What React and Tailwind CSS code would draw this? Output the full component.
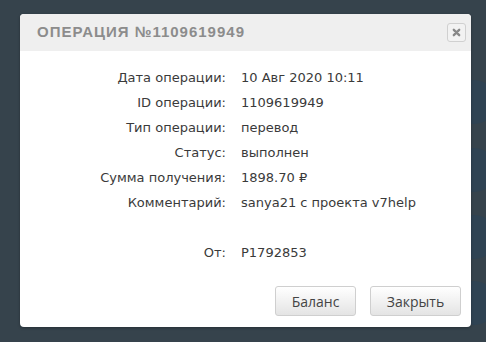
import React from 'react';

const rows = [
  ['Дата операции:', '10 Авг 2020 10:11'],
  ['ID операции:', '1109619949'],
  ['Тип операции:', 'перевод'],
  ['Статус:', 'выполнен'],
  ['Сумма получения:', '1898.70 ₽'],
  ['Комментарий:', 'sanya21 с проекта v7help'],
  ['', ''],
  ['От:', 'P1792853'],
];

function App() {
  return (
    <div className="relative w-full h-[342px] overflow-hidden bg-[#36434c] pt-[14px] pl-[20px]">
      {/* background blobs behind the dialog */}
      <div className="absolute left-[452px] top-[80px] w-[44px] h-[44px] rounded-full bg-[#2f4353]" />
      <div className="absolute left-[452px] top-[148px] w-[44px] h-[44px] rounded-full bg-[#2f4353]" />
      <div className="absolute left-[452px] top-[215px] w-[44px] h-[44px] rounded-full bg-[#2f4353]" />
      <div className="absolute left-[452px] top-[281px] w-[44px] h-[44px] rounded-full bg-[#2f4353]" />

      <div className="relative w-[451px] h-[313px] rounded-[4px] bg-white overflow-hidden shadow-[0_1px_3px_rgba(0,0,0,0.3)] flex flex-col">
        <div className="h-[37px] shrink-0 bg-[#efefef] flex items-center justify-between pl-[17px] pr-[5px]">
          <div className="text-[15px] font-bold tracking-[1px] text-[#8c8c8c] font-['Liberation_Sans',sans-serif]">
            ОПЕРАЦИЯ №1109619949
          </div>
          <button className="w-[19px] h-[19px] rounded-[3px] border border-[#d0d0d0] bg-[#f2f2f2] flex items-center justify-center">
            <svg width="9" height="9" viewBox="0 0 10 10">
              <path d="M2 2 L8 8 M8 2 L2 8" stroke="#888" strokeWidth="2.6" strokeLinecap="round" />
            </svg>
          </button>
        </div>

        <div className="pt-[14px] font-['DejaVu_Sans',sans-serif] text-[13px] text-[#3a3a3a]">
          {rows.map(([label, value], i) => (
            <div key={i} className="flex h-[25px] items-center">
              <div className="w-[206px] text-right">{label}</div>
              <div className="ml-[15px]">{value}</div>
            </div>
          ))}
        </div>

        <div className="mt-auto flex justify-end gap-[14px] pr-[10px] pb-[11px]">
          <button className="h-[30px] w-[81px] rounded-[3px] border border-[#cfcfcf] bg-gradient-to-b from-white to-[#e4e4e4] text-[14px] text-[#444] font-['Open_Sans',sans-serif]">
            Баланс
          </button>
          <button className="h-[30px] w-[91px] rounded-[3px] border border-[#cfcfcf] bg-gradient-to-b from-white to-[#e4e4e4] text-[14px] text-[#444] font-['Open_Sans',sans-serif]">
            Закрыть
          </button>
        </div>
      </div>
    </div>
  );
}

export default App;
